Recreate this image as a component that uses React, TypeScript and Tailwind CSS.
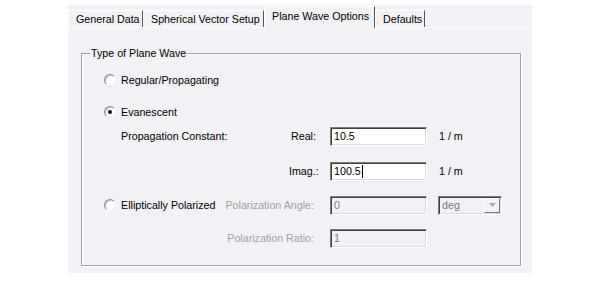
const font = { fontFamily: '"Liberation Sans", Arial, sans-serif' };

const Radio = ({ checked }: { checked?: boolean }) => (
  <div className="w-[12px] h-[12px] shrink-0 rounded-full bg-white flex items-center justify-center border border-t-[#8c8c8c] border-l-[#8c8c8c] border-r-[#f0f0f0] border-b-[#f0f0f0] shadow-[inset_1px_1px_0_#c4c4c4]">
    {checked && <div className="w-[4px] h-[4px] rounded-full bg-black" />}
  </div>
);

const Field = ({ value, disabled, caret, w = 'w-[97px]' }: { value: string; disabled?: boolean; caret?: boolean; w?: string }) => (
  <div
    className={`${w} h-[19px] shrink-0 flex items-center pl-[3px] border border-t-[#7c7c7c] border-l-[#7c7c7c] border-b-[#ffffff] border-r-[#ffffff] shadow-[inset_1px_1px_0_#404040,inset_-1px_-1px_0_#dcdcdc] ${
      disabled ? 'bg-[#f2f1f5] text-[#7a7a7a]' : 'bg-white text-black'
    }`}
  >
    <span className={caret ? 'border-r border-black pr-[1px] leading-[13px]' : ''}>{value}</span>
  </div>
);

const Tab = ({ label, w, active }: { label: string; w: string; active?: boolean }) => (
  <div
    className={`${w} flex items-center pl-[7px] whitespace-nowrap border-l border-t border-l-white border-t-white border-r border-r-[#555] ${
      active ? 'h-[22px] -mb-[1px] pb-[3px] relative z-10 bg-[#f2f1f5]' : 'h-[17px]'
    }`}
  >
    {label}
  </div>
);

export default function App() {
  return (
    <div className="w-[600px] h-[284px] bg-white pt-[5px] pl-[68px] text-[10.7px] text-black whitespace-nowrap" style={font}>
      <div className="w-[464px] h-[268px] bg-[#f2f1f5] flex flex-col">
        <div className="h-[23px] flex items-end border-b border-white">
          <Tab label="General Data" w="w-[75px]" />
          <Tab label="Spherical Vector Setup" w="w-[121px]" />
          <Tab label="Plane Wave Options" w="w-[111px]" active />
          <Tab label="Defaults" w="w-[50px]" />
        </div>

        <div className="pl-[13px] pt-[25px]">
          <div className="relative w-[440px] h-[213px] border border-[#a0a0a0] shadow-[1px_1px_0_#fff,inset_1px_1px_0_#fff] pt-[16px]">
            <span className="absolute left-[8px] -top-[8px] px-[1px] bg-[#f2f1f5] leading-[14px]">Type of Plane Wave</span>

            <div className="h-[20px] flex items-center pl-[22px] gap-[5px]">
              <Radio />
              <span>Regular/Propagating</span>
            </div>

            <div className="h-[20px] mt-[12px] flex items-center pl-[22px] gap-[5px]">
              <Radio checked />
              <span>Evanescent</span>
            </div>

            <div className="h-[20px] mt-[4px] flex items-center pl-[39px]">
              <span className="w-[170px]">Propagation Constant:</span>
              <span className="w-[39px]">Real:</span>
              <Field value="10.5" />
              <span className="ml-[12px]">1 / m</span>
            </div>

            <div className="h-[20px] mt-[15px] flex items-center pl-[207px]">
              <span className="w-[41px]">Imag.:</span>
              <Field value="100.5" caret />
              <span className="ml-[12px]">1 / m</span>
            </div>

            <div className="h-[20px] mt-[14px] flex items-center pl-[22px]">
              <Radio />
              <span className="ml-[5px] w-[101px]">Elliptically Polarized</span>
              <span className="w-[108px] shrink-0 text-right pr-[16px] text-[#a2a2a2]">Polarization Angle:</span>
              <Field value="0" disabled />
              <div className="ml-[11px] w-[64px] h-[19px] shrink-0 flex items-center border border-t-[#7c7c7c] border-l-[#7c7c7c] border-b-white border-r-white shadow-[inset_1px_1px_0_#404040,inset_-1px_-1px_0_#dcdcdc] bg-[#f2f1f5]">
                <span className="flex-1 pl-[3px] text-[#7a7a7a]">deg</span>
                <div className="w-[16px] h-[15px] mr-[1px] flex items-center justify-center border border-t-white border-l-white border-b-[#7c7c7c] border-r-[#7c7c7c] bg-[#f2f1f5]">
                  <svg width="7" height="4" viewBox="0 0 7 4">
                    <path d="M0 0 H7 L3.5 4 Z" fill="#a8a8a8" />
                  </svg>
                </div>
              </div>
            </div>

            <div className="h-[20px] mt-[13px] flex items-center pl-[140px]">
              <span className="w-[108px] shrink-0 text-right pr-[16px] text-[#a2a2a2]">Polarization Ratio:</span>
              <Field value="1" disabled />
            </div>
          </div>
        </div>
      </div>
    </div>
  );
}
